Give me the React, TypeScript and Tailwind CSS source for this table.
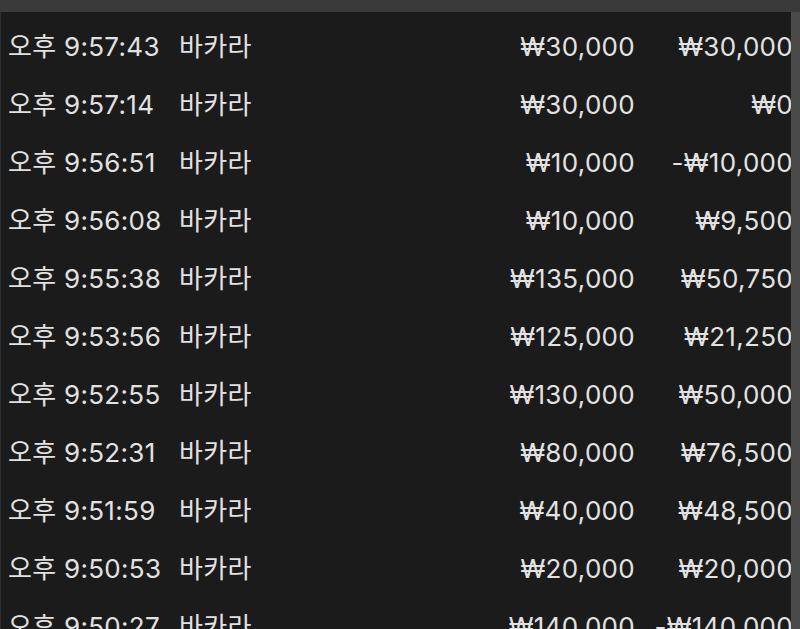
const rows = [
  ["오후 9:57:43", "₩30,000", "₩30,000"],
  ["오후 9:57:14", "₩30,000", "₩0"],
  ["오후 9:56:51", "₩10,000", "-₩10,000"],
  ["오후 9:56:08", "₩10,000", "₩9,500"],
  ["오후 9:55:38", "₩135,000", "₩50,750"],
  ["오후 9:53:56", "₩125,000", "₩21,250"],
  ["오후 9:52:55", "₩130,000", "₩50,000"],
  ["오후 9:52:31", "₩80,000", "₩76,500"],
  ["오후 9:51:59", "₩40,000", "₩48,500"],
  ["오후 9:50:53", "₩20,000", "₩20,000"],
  ["오후 9:50:27", "₩140,000", "-₩140,000"],
];

const App = () => {
  return (
    <div className="w-[800px] h-[629px] overflow-hidden bg-[#1b1b1b] flex flex-col font-['Inter','Noto_Sans_CJK_KR',sans-serif] text-[#e2e2e2]">
      <div className="h-[12px] shrink-0 bg-[#3a3a3a]" />
      <div className="flex flex-1 min-h-0">
        <div className="w-[1px] bg-[#2e2e2e]" />
        <div className="flex-1 pt-[5px] pl-[7px] -mr-[2px]">
          {rows.map(([time, bet, win]) => (
            <div key={time} className="h-[58px] flex items-center text-[26px] tracking-[0.3px] whitespace-nowrap">
              <span className="w-[171px]">{time}</span>
              <span className="flex-1">바카라</span>
              <span className="w-[150px] text-right">{bet}</span>
              <span className="w-[158px] text-right">{win}</span>
            </div>
          ))}
        </div>
        <div className="w-[9px] bg-[#4a4a4a] relative" />
      </div>
    </div>
  );
};

export default App;
